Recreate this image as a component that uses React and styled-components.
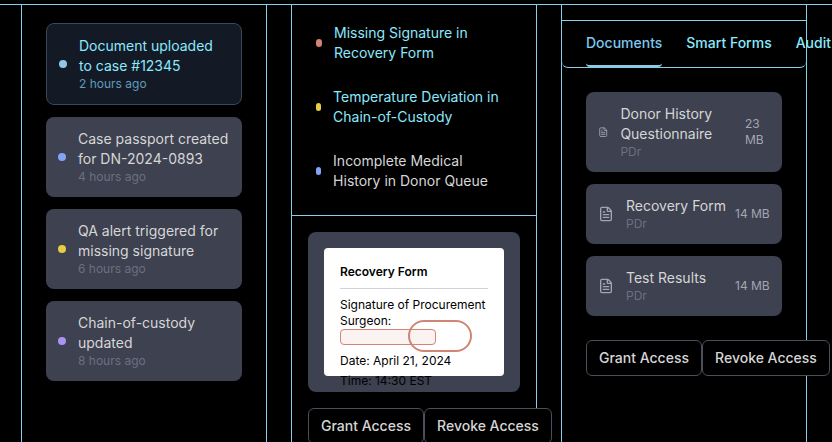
import React from 'react';
import styled, { createGlobalStyle } from 'styled-components';
import { FileText } from 'lucide-react';

const c = {
  line: '#87ceeb',
  cyan: '#8be9fd',
  sky: '#8ecae6',
  card: '#3d4150',
  text: '#d6d6d6',
  muted: '#6b7080',
  red: '#d08575',
};

const GlobalStyle = createGlobalStyle`
  *, *::before, *::after { box-sizing: border-box; }
  body { margin: 0; background: #000; overflow: hidden; }
`;

const Page = styled.div`
  width: 832px;
  height: 442px;
  padding-top: 4px;
  overflow: hidden;
  background: #000;
  color: ${c.text};
  font: 400 14px/20px Inter, sans-serif;
`;

const Columns = styled.main`
  display: grid;
  grid-template-columns: repeat(3, 246px);
  column-gap: 24px;
  height: 438px;
  padding-left: 21px;
  border-top: 1px solid ${c.line};
`;

const Panel = styled.section`
  min-width: 0;
  border: solid ${c.line};
  border-width: 0 1px;
`;

const CardList = styled.div`
  display: flex;
  flex-direction: column;
  gap: 12px;
  padding: ${(p) => p.$top}px 24px 24px;
`;

const Card = styled.article`
  display: flex;
  align-items: center;
  gap: 12px;
  padding: 12px;
  border-radius: 8px;
  background: ${(p) => (p.$active ? '#131a26' : c.card)};
  border: ${(p) => (p.$active ? '1px solid #36495a' : '0')};
`;

const Dot = styled.span`
  flex: none;
  width: ${(p) => p.$width || 8}px;
  height: 8px;
  border-radius: 9999px;
  background: ${(p) => p.$color};
`;

const Body = styled.div`
  flex: 1;
  min-width: 0;
  white-space: pre;
`;

const Title = styled.div`
  color: ${(p) => (p.$active ? c.cyan : c.text)};
`;

const Meta = styled.div`
  font-size: 12px;
  line-height: 16px;
  color: ${(p) => (p.$active ? '#5f9cbd' : c.muted)};
`;

const AlertList = styled.div`
  padding: 6px 12px 12px;
  border-bottom: 1px solid ${c.line};
`;

const Alert = styled.div`
  display: flex;
  align-items: center;
  gap: 12px;
  padding: 12px;
  white-space: pre-line;
`;

const Preview = styled.div`
  height: 160px;
  margin: 16px 16px 16px;
  padding: 16px;
  border-radius: 8px;
  background: ${c.card};
`;

const Paper = styled.div`
  position: relative;
  height: 128px;
  padding: 16px;
  border-radius: 4px;
  background: #fff;
  color: #000;
  font-size: 12px;
  line-height: 16px;
`;

const PaperTitle = styled.div`
  padding-bottom: 8px;
  margin-bottom: 8px;
  border-bottom: 1px solid #d1d1dc;
  font-weight: 600;
`;

const SignatureBox = styled.div`
  width: 96px;
  height: 16px;
  margin-bottom: 8px;
  border: 1px solid ${c.red};
  border-radius: 4px;
  background: #faf3f1;
`;

const PaperLine = styled.div`
  margin-bottom: 4px;
  white-space: nowrap;
`;

const Highlight = styled.div`
  position: absolute;
  top: 72px;
  right: 32px;
  width: 64px;
  height: 32px;
  border: 2px solid ${c.red};
  border-radius: 16px;
`;

const Actions = styled.div`
  position: relative;
  display: flex;
  width: max-content;
  margin-left: ${(p) => p.$left}px;
`;

const Button = styled.button`
  height: 36px;
  width: ${(p) => p.$width}px;
  padding: 0 12px;
  border: 1px solid #4b4f5c;
  border-radius: 6px;
  background: #000;
  color: ${c.text};
  font: 500 14px/20px Inter, sans-serif;
  white-space: nowrap;
`;

const PanelHeader = styled.div`
  height: 16px;
  border-bottom: 1px solid ${c.line};
`;

const Tabs = styled.nav`
  display: flex;
  gap: 24px;
  height: 47px;
  padding: 0 24px;
  border-bottom: 1px solid ${c.line};
  border-radius: 6px;
`;

const Tab = styled.div`
  flex: none;
  padding: 12px 0;
  border-bottom: 2px solid ${(p) => (p.$active ? c.sky : 'transparent')};
  border-radius: 4px;
  color: ${(p) => (p.$active ? '#7cc8f0' : c.cyan)};
  font-weight: 500;
  white-space: nowrap;
`;

const DocIcon = styled(FileText)`
  flex: none;
  color: #a3a6b0;
`;

const Size = styled.div`
  width: ${(p) => p.$width}px;
  font-size: 12px;
  line-height: 16px;
  color: #a3a6b0;
  white-space: pre-line;
`;

const activity = [
  ['Document uploaded\nto case #12345', '2 hours ago', '#8ecae6', true],
  ['Case passport created\nfor DN-2024-0893', '4 hours ago', '#82a4f7'],
  ['QA alert triggered for\nmissing signature', '6 hours ago', '#e8cc43'],
  ['Chain-of-custody\nupdated', '8 hours ago', '#aa93f5'],
];

const alerts = [
  ['Missing Signature in\nRecovery Form', c.red, 6, true],
  ['Temperature Deviation in\nChain-of-Custody', '#e8cc43', 5.1, true],
  ['Incomplete Medical\nHistory in Donor Queue', '#82a4f7', 5.1, false],
];

const documents = [
  ['Donor History\nQuestionnaire', '23\nMB', 10.4, 25],
  ['Recovery Form', '14 MB', 16, 35],
  ['Test Results', '14 MB', 16, 35],
];

function AccessActions({ left }) {
  return (
    <Actions $left={left}>
      <Button $width={116}>Grant Access</Button>
      <Button $width={128}>Revoke Access</Button>
    </Actions>
  );
}

export default function App() {
  return (
    <Page>
      <GlobalStyle />
      <Columns>
        <Panel>
          <CardList $top={18}>
            {activity.map(([title, time, color, active]) => (
              <Card key={title} $active={active}>
                <Dot $color={color} />
                <Body>
                  <Title $active={active}>{title}</Title>
                  <Meta $active={active}>{time}</Meta>
                </Body>
              </Card>
            ))}
          </CardList>
        </Panel>
        <Panel>
          <AlertList>
            {alerts.map(([title, color, width, active]) => (
              <Alert key={title}>
                <Dot $color={color} $width={width} />
                <Title $active={active}>{title}</Title>
              </Alert>
            ))}
          </AlertList>
          <Preview>
            <Paper>
              <PaperTitle>Recovery Form</PaperTitle>
              <div>Signature of Procurement Surgeon:</div>
              <SignatureBox />
              <PaperLine>Date: April 21, 2024</PaperLine>
              <PaperLine>Time: 14:30 EST</PaperLine>
              <Highlight />
            </Paper>
          </Preview>
          <AccessActions left={16} />
        </Panel>
        <Panel>
          <PanelHeader />
          <Tabs>
            <Tab $active>Documents</Tab>
            <Tab>Smart Forms</Tab>
            <Tab>Audit</Tab>
          </Tabs>
          <CardList $top={24}>
            {documents.map(([title, size, icon, width]) => (
              <Card key={title}>
                <DocIcon size={icon} />
                <Body>
                  <Title>{title}</Title>
                  <Meta>PDr</Meta>
                </Body>
                <Size $width={width}>{size}</Size>
              </Card>
            ))}
          </CardList>
          <AccessActions left={24} />
        </Panel>
      </Columns>
    </Page>
  );
}
